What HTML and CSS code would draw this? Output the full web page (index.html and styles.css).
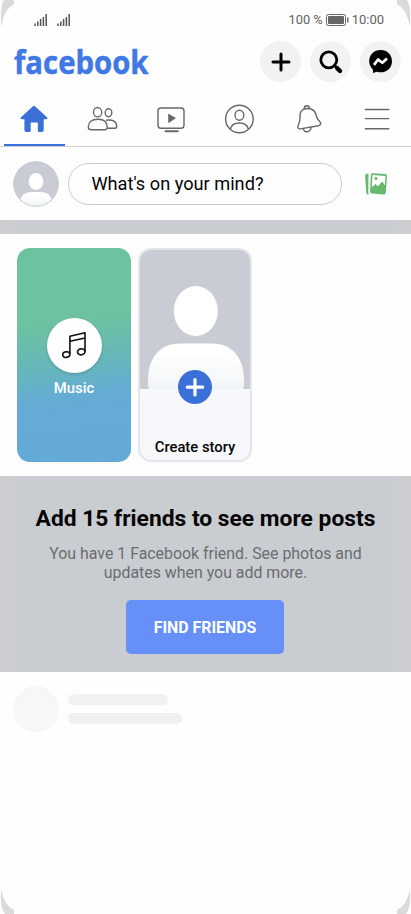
FILE: index.html
```
<!DOCTYPE html>
<html lang="en">
<head>
<meta charset="utf-8">
<title>Facebook</title>
<link rel="stylesheet" href="styles.css">
</head>
<body>
<div class="screen">
  <svg class="corner top-left" viewBox="0 0 14 28"><path d="M4 0H14V4Q4 9 1.3 26Q-.5 8 4 0Z"/></svg>
  <svg class="corner top-right" viewBox="0 0 14 28"><path d="M4 0H14V4Q4 9 1.3 26Q-.5 8 4 0Z"/></svg>
  <svg class="corner bottom-left" viewBox="0 0 14 28"><path d="M5 0H14V4Q4 9 1.3 24Q-.5 8 5 0Z"/></svg>
  <svg class="corner bottom-right" viewBox="0 0 14 28"><path d="M5 0H14V4Q4 9 1.3 24Q-.5 8 5 0Z"/></svg>

  <div class="status">
    <div class="signals">
      <svg width="13" height="12" viewBox="0 0 13 12"><path d="M1 9.5V12M3.8 7.5V12M6.6 5V12M9.4 3V12M12.2 0V12"/></svg>
      <svg width="13" height="12" viewBox="0 0 13 12"><path d="M1 9.5V12M3.8 7.5V12M6.6 5V12M9.4 3V12M12.2 0V12"/></svg>
    </div>
    <div class="status-right">
      <span class="percent">100 %</span>
      <svg width="23" height="12" viewBox="0 0 23 12"><rect x=".5" y=".5" width="19" height="11" rx="2" fill="none" stroke="#666"/><rect x="2" y="2" width="16" height="8" rx=".7" fill="#666"/><path d="M21.8 3.5V8.5" stroke="#666" stroke-width="1.4"/></svg>
      <span class="clock">10:00</span>
    </div>
  </div>

  <header class="header">
    <svg class="logo" width="140" height="42" viewBox="0 0 140 42"><text x="0" y="33" textLength="134.5" lengthAdjust="spacingAndGlyphs">facebook</text></svg>
    <div class="actions">
      <button class="round"><svg width="41" height="41" viewBox="0 0 41 41"><path d="M21 13V29M13 21H29" stroke="#000" stroke-width="3" stroke-linecap="round"/></svg></button>
      <button class="round"><svg width="41" height="41" viewBox="0 0 41 41"><circle cx="18.8" cy="18.8" r="8" fill="none" stroke="#000" stroke-width="2.8"/><path d="M24.5 24.5L26.5 26.5" stroke="#000" stroke-width="2.6"/><path d="M27.2 27.2L30 30" stroke="#000" stroke-width="4.4" stroke-linecap="round"/></svg></button>
      <button class="round"><svg width="41" height="41" viewBox="0 0 41 41"><path d="M20.6 9C14 9 9.2 13.8 9.2 20.3C9.2 23.7 10.6 26.4 12.9 28.4L13 32L16.8 30.7C18 31.1 19.2 31.3 20.6 31.3C27.2 31.3 32 26.7 32 20.2C32 13.8 27.2 9 20.6 9Z"/><path d="M14 23.8L18.1 18.5L22.3 21.8L27 17.5" fill="none" stroke="#fff" stroke-width="2.7" stroke-linejoin="round"/></svg></button>
    </div>
  </header>

  <nav class="tabs">
    <div class="tab active"><svg width="32" height="32" viewBox="0 0 32 32"><path d="M15 3.3Q16 2.5 17 3.3L29.2 14.5Q30.2 16 28.3 16.2H25.7V27Q25.7 29 23.7 29H21Q19.8 29 19.8 27.8V19.4H12.7V27.8Q12.7 29 11.5 29H8.4Q6.4 29 6.4 27V16.2H3.7Q1.8 16 2.8 14.5Z" fill="#3a70d8"/></svg></div>
    <div class="tab"><svg width="32" height="32" viewBox="0 0 32 32"><ellipse cx="11.6" cy="9.2" rx="4.1" ry="4.7"/><ellipse cx="22.5" cy="9.8" rx="3.3" ry="4"/><path d="M5.3 26.7H18.8Q21.3 26.7 21.3 24.3Q21.3 16.3 12 16.3Q2.3 16.3 2.3 24.2Q2.3 26.7 5.3 26.7ZM20 17.2Q30.7 16 30.7 23.5Q30.7 25.3 28.8 25.3H21.3"/></svg></div>
    <div class="tab"><svg width="32" height="32" viewBox="0 0 32 32"><rect x="3" y="5" width="26" height="20.3" rx="3"/><path d="M10.5 28.2H22.8" stroke-width="1.9" stroke-linecap="round"/><path d="M13.2 11.3Q13.2 10.6 14 11L20.4 14.7Q21 15 20.4 15.5L14 19.7Q13.2 20 13.2 19.2Z" fill="#65676b" stroke="none"/></svg></div>
    <div class="tab"><svg width="32" height="32" viewBox="0 0 32 32"><circle cx="16.4" cy="16" r="13.8"/><ellipse cx="16.4" cy="12.2" rx="4.4" ry="5"/><path d="M7.4 26.3Q8.4 20 16.4 20T25.4 26.3"/></svg></div>
    <div class="tab"><svg width="32" height="32" viewBox="1 0 32 32"><path d="M13 6.2C10.3 7.3 8.7 10.3 9 14C9.2 17.5 8.5 19.4 7.3 22C6.3 24.4 7 26.1 9.2 25.9L27.5 22.7C30 22 30.3 20.2 28.7 18.6C26 16.2 25.5 14.8 25 11.8C24.3 7.2 18.7 4 13 6.2Z"/><path d="M13.2 6Q13 3 15.8 2.8Q18.3 2.7 18.5 5.5M12.3 25.5C12.7 30.3 19.7 29.8 20.2 24"/></svg></div>
    <div class="tab"><svg width="32" height="32" viewBox="0 0 32 32"><path d="M4.4 6.5H27.8M4.4 15.6H27.8M4.4 25.8H27.8" stroke-linecap="round"/></svg></div>
  </nav>

  <section class="composer">
    <svg class="avatar" width="46" height="46" viewBox="0 0 46 46">
      <defs><clipPath id="disc"><circle cx="23" cy="23" r="22.5"/></clipPath><linearGradient id="body" x2="0" y2="1"><stop offset=".2" stop-color="#fff"/><stop offset="1" stop-color="#f1f4f7"/></linearGradient></defs>
      <circle cx="23" cy="23" r="22.5" fill="#c9ccd4"/><g clip-path="url(#disc)"><ellipse cx="23" cy="20.5" rx="7.3" ry="8.5" fill="#fff"/><path d="M7 46V41Q8 31 18 31H28Q38 31 39 41V46Z" fill="url(#body)"/></g><circle cx="23" cy="23" r="22.3" fill="none" stroke="#c4c5c9" stroke-width=".8"/>
    </svg>
    <div class="prompt">What's on your mind?</div>
    <svg class="photo" width="26" height="26" viewBox="0 0 26 26"><g fill="#67b96f"><path d="M5.5 2.6L3.8 2.8Q2 3.1 2.1 5L3.3 22Q3.5 23.7 5.2 23.6L5.8 23.5Q5.2 22.5 5.3 21Z"/><path d="M9.8 2.2L22.3 3.1Q24.2 3.3 24 5.3L22.8 21.5Q22.6 23.5 20.7 23.4L8.8 22.5Q6.8 22.3 7 20.3L7.8 4Q7.9 2.1 9.8 2.2Z"/></g><path d="M9.5 4L22.5 4.9L21.8 14.3L19.2 10.6L17.3 12.4L15 15.2L12.5 13L8.8 16.2Z" fill="#fff"/><circle cx="13" cy="7.6" r="1.5" fill="#67b96f"/></svg>
  </section>
  <div class="divider"></div>

  <section class="stories">
    <div class="story music">
      <div class="note"><svg width="55" height="55" viewBox="0 0 55 55"><g fill="none" stroke="#111" stroke-width="1.6" stroke-linejoin="round"><path d="M22.9 36V18.2L38 14.8V33.5M22.9 23.2L38 20"/><ellipse cx="19.3" cy="36.6" rx="3.6" ry="2.8" transform="rotate(-10 19.3 36.6)"/><ellipse cx="34.2" cy="33.8" rx="3.8" ry="3" transform="rotate(-10 34.2 33.8)"/></g></svg></div>
      <span>Music</span>
    </div>
    <div class="story create">
      <svg class="portrait" width="110" height="139" viewBox="0 0 110 139"><ellipse cx="55.8" cy="61" rx="22" ry="25" fill="#fff"/><path d="M9 140Q8 137 8 130C8 109 19 93.5 40 93.5H72C93 93.5 104 109 104 130Q104 137 103 140Z" fill="url(#body)"/></svg>
      <svg class="add" width="34" height="34" viewBox="0 0 34 34"><circle cx="17" cy="17" r="17" fill="#3a70d8"/><path d="M17 9.5V25M9.3 17.2H24.7" stroke="#fff" stroke-width="3.2" stroke-linecap="round"/></svg>
      <span>Create story</span>
    </div>
  </section>

  <section class="friends">
    <h2>Add 15 friends to see more posts</h2>
    <p>You have 1 Facebook friend. See photos and<br>updates when you add more.</p>
    <button class="find">FIND FRIENDS</button>
  </section>

  <section class="loading">
    <div class="blank-avatar"></div>
    <div class="blank-lines"><div class="line"></div><div class="line wide"></div></div>
  </section>
</div>
</body>
</html>
```
FILE: styles.css
```
* { box-sizing: border-box; }
body { margin: 0; font-family: Roboto, "Liberation Sans", sans-serif; color: #050505; }
button { border: 0; padding: 0; font: inherit; }
svg { display: block; flex: none; }
.screen { position: relative; width: 411px; height: 914px; overflow: hidden; background: #fefefe; }
.corner { position: absolute; width: 14px; height: 28px; fill: #dadada; }
.top-left { top: 0; left: 0; }
.top-right { top: 0; right: 0; transform: scaleX(-1); }
.bottom-left { bottom: 0; left: 0; transform: scaleY(-1); }
.bottom-right { bottom: 0; right: 0; transform: scale(-1); }

.status { height: 41px; padding: 14px 27px 0 34px; display: flex; justify-content: space-between; }
.signals { display: flex; gap: 10px; }
.signals path { stroke: #555; stroke-width: 1.5; }
.status-right { display: flex; height: 12px; align-items: center; color: #626262; font-size: 12.8px; line-height: 12px; white-space: nowrap; }
.percent { margin-right: 3px; }
.clock { margin-left: 3px; font-size: 13px; }

.header { height: 42px; padding: 0 10px 0 14px; display: flex; justify-content: space-between; }
.logo { overflow: visible; }
.logo text { font: 700 33px "Open Sans", "Noto Sans", sans-serif; fill: #4078e5; stroke: #4078e5; stroke-width: .5; }
.actions { display: flex; gap: 9px; }
.round { width: 41px; height: 41px; border-radius: 50%; background: #f1f2f4; }

.tabs { height: 64px; display: flex; border-bottom: 1px solid #d0d1d3; }
.tab { flex: 1; display: flex; justify-content: center; padding-top: 20px; }
.tab svg { fill: none; stroke: #65676b; stroke-width: 1.4; }
.tab.active svg { stroke: none; }
.active { margin-left: 3.5px; margin-right: 3.5px; flex: 0 0 61px; border-bottom: 2px solid #3a70d8; }

.composer { height: 73px; padding: 0 21px 0 13.4px; display: flex; align-items: center; }
.prompt { width: 274px; height: 42px; margin-left: 9px; padding-left: 22px; border: 1px solid #cbcccf; border-radius: 21px; font-size: 18.2px; line-height: 40px; }
.photo { margin-left: 21px; }
.divider { height: 14px; background: linear-gradient(90deg, #cdced2 14px, #c9ccd0 14px 394px, #cdced2 394px); }

.stories { height: 242px; padding: 13.5px 17px; display: flex; gap: 7px; }
.story { height: 214.5px; width: 114px; border-radius: 13px; overflow: hidden; display: flex; flex-direction: column; align-items: center; }
.music { padding-top: 70px; background: linear-gradient(173deg, #6dc2a0 0 34%, #66b6ba 54%, #64acd4 68%, #64a9d7); color: #fff; font-size: 14.8px; font-weight: 500; }
.note { width: 55px; height: 55px; border-radius: 50%; background: #fff; box-shadow: 0 1px 3px #0003; }
.music span { margin-top: 6px; line-height: 18px; }
.create { border: 2px solid #e4e5e8; background: #f6f8fb; font-size: 14.8px; font-weight: 500; }
.portrait { background: #c9ccd4; }
.add { margin-top: -19px; position: relative; }
.create span { margin-top: 34.5px; line-height: 18px; white-space: nowrap; }

.friends { height: 196px; padding-top: 29px; text-align: center; background: linear-gradient(90deg, #cdced2 14px, #c9ccd0 14px 394px, #cdced2 394px); }
h2 { margin: 0; font-size: 22.8px; line-height: 28px; font-weight: 700; letter-spacing: 0; white-space: nowrap; }
p { margin: 11px 0 18px; color: #6b6d71; font-size: 15.9px; line-height: 19px; }
.find { width: 158px; height: 54px; margin-right: 1px; border-radius: 5px; background: #668ff7; color: #fff; font-size: 15.9px; font-weight: 700; }

.loading { padding: 14px 13.4px; display: flex; }
.blank-avatar { width: 46px; height: 46px; border-radius: 50%; background: #f7f7f7; }
.blank-lines { margin: 7.5px 0 0 9px; }
.line { width: 100px; height: 11.5px; margin-bottom: 7.5px; border-radius: 6px; background: #f2f2f2; }
.wide { width: 114px; background: #f0f0f0; }
```
